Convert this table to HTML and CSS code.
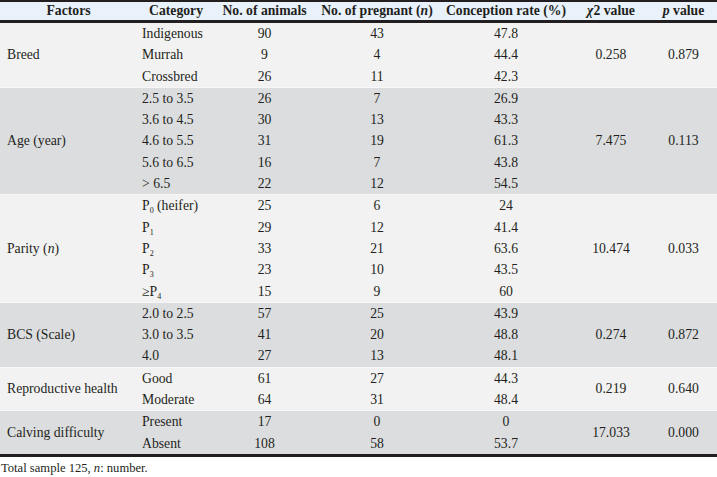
FILE: index.html
```html
<!DOCTYPE html>
<html>
<head>
<meta charset="utf-8">
<link rel="stylesheet" href="styles.css">
</head>
<body>
<table class="data">
  <colgroup>
    <col class="c0"><col class="c1"><col class="c2"><col class="c3"><col class="c4"><col class="c5"><col class="c6">
  </colgroup>
  <thead>
    <tr>
      <th>Factors</th>
      <th>Category</th>
      <th>No. of animals</th>
      <th>No. of pregnant (<i>n</i>)</th>
      <th>Conception rate (%)</th>
      <th><i>χ</i>2 value</th>
      <th><i>p</i> value</th>
    </tr>
  </thead>
  <tbody class="light">
    <tr class="first"><td class="fac" rowspan="3">Breed</td><td class="cat">Indigenous</td><td>90</td><td>43</td><td>47.8</td><td rowspan="3">0.258</td><td rowspan="3">0.879</td></tr>
    <tr><td class="cat">Murrah</td><td>9</td><td>4</td><td>44.4</td></tr>
    <tr><td class="cat">Crossbred</td><td>26</td><td>11</td><td>42.3</td></tr>
  </tbody>
  <tbody class="dark">
    <tr class="first"><td class="fac" rowspan="5">Age (year)</td><td class="cat">2.5 to 3.5</td><td>26</td><td>7</td><td>26.9</td><td rowspan="5">7.475</td><td rowspan="5">0.113</td></tr>
    <tr><td class="cat">3.6 to 4.5</td><td>30</td><td>13</td><td>43.3</td></tr>
    <tr><td class="cat">4.6 to 5.5</td><td>31</td><td>19</td><td>61.3</td></tr>
    <tr><td class="cat">5.6 to 6.5</td><td>16</td><td>7</td><td>43.8</td></tr>
    <tr><td class="cat">&gt; 6.5</td><td>22</td><td>12</td><td>54.5</td></tr>
  </tbody>
  <tbody class="light">
    <tr class="first"><td class="fac" rowspan="5">Parity (<i>n</i>)</td><td class="cat">P<sub>0</sub> (heifer)</td><td>25</td><td>6</td><td>24</td><td rowspan="5">10.474</td><td rowspan="5">0.033</td></tr>
    <tr><td class="cat">P<sub>1</sub></td><td>29</td><td>12</td><td>41.4</td></tr>
    <tr><td class="cat">P<sub>2</sub></td><td>33</td><td>21</td><td>63.6</td></tr>
    <tr><td class="cat">P<sub>3</sub></td><td>23</td><td>10</td><td>43.5</td></tr>
    <tr><td class="cat">≥P<sub>4</sub></td><td>15</td><td>9</td><td>60</td></tr>
  </tbody>
  <tbody class="dark">
    <tr class="first"><td class="fac" rowspan="3">BCS (Scale)</td><td class="cat">2.0 to 2.5</td><td>57</td><td>25</td><td>43.9</td><td rowspan="3">0.274</td><td rowspan="3">0.872</td></tr>
    <tr><td class="cat">3.0 to 3.5</td><td>41</td><td>20</td><td>48.8</td></tr>
    <tr><td class="cat">4.0</td><td>27</td><td>13</td><td>48.1</td></tr>
  </tbody>
  <tbody class="light">
    <tr class="first"><td class="fac" rowspan="2">Reproductive health</td><td class="cat">Good</td><td>61</td><td>27</td><td>44.3</td><td rowspan="2">0.219</td><td rowspan="2">0.640</td></tr>
    <tr><td class="cat">Moderate</td><td>64</td><td>31</td><td>48.4</td></tr>
  </tbody>
  <tbody class="dark last">
    <tr class="first"><td class="fac" rowspan="2">Calving difficulty</td><td class="cat">Present</td><td>17</td><td>0</td><td>0</td><td rowspan="2">17.033</td><td rowspan="2">0.000</td></tr>
    <tr><td class="cat">Absent</td><td>108</td><td>58</td><td>53.7</td></tr>
  </tbody>
</table>
<p class="note">Total sample 125, <i>n</i>: number.</p>
</body>
</html>
```
FILE: styles.css
```css
html, body {
  margin: 0;
  padding: 0;
  background: #ffffff;
}
body {
  font-family: "Liberation Serif", "Times New Roman", serif;
  color: #231f20;
  width: 717px;
}
.data {
  width: 717px;
  border-collapse: collapse;
  table-layout: fixed;
  font-size: 13.7px;
  border-top: 2px solid #231f20;
  border-bottom: 3px solid #231f20;
}
.c0 { width: 137px; }
.c1 { width: 78px; }
.c2 { width: 99px; }
.c3 { width: 126px; }
.c4 { width: 132px; }
.c5 { width: 78px; }
.c6 { width: 67px; }
.data th {
  background: #e9f1fb;
  font-weight: bold;
  height: 18px;
  line-height: 18px;
  padding: 0;
  text-align: center;
  white-space: nowrap;
  border-bottom: 3px solid #231f20;
}
.data td {
  padding: 0;
  height: 21.3px;
  line-height: 21.3px;
  text-align: center;
  white-space: nowrap;
}
.data td.fac {
  text-align: left;
  padding-left: 7px;
}
.data td.cat {
  text-align: left;
  padding-left: 5px;
}
.light td { background: #f2f2f2; }
.dark td { background: #dcdddf; }
tbody tr.first td {
  border-top: 1px solid #f7f7f7;
}
.data sub {
  font-size: 8px;
  line-height: 0;
  vertical-align: -3px;
}
.note {
  margin: 4px 0 0 1px;
  font-size: 12.6px;
  line-height: 14px;
}
```
